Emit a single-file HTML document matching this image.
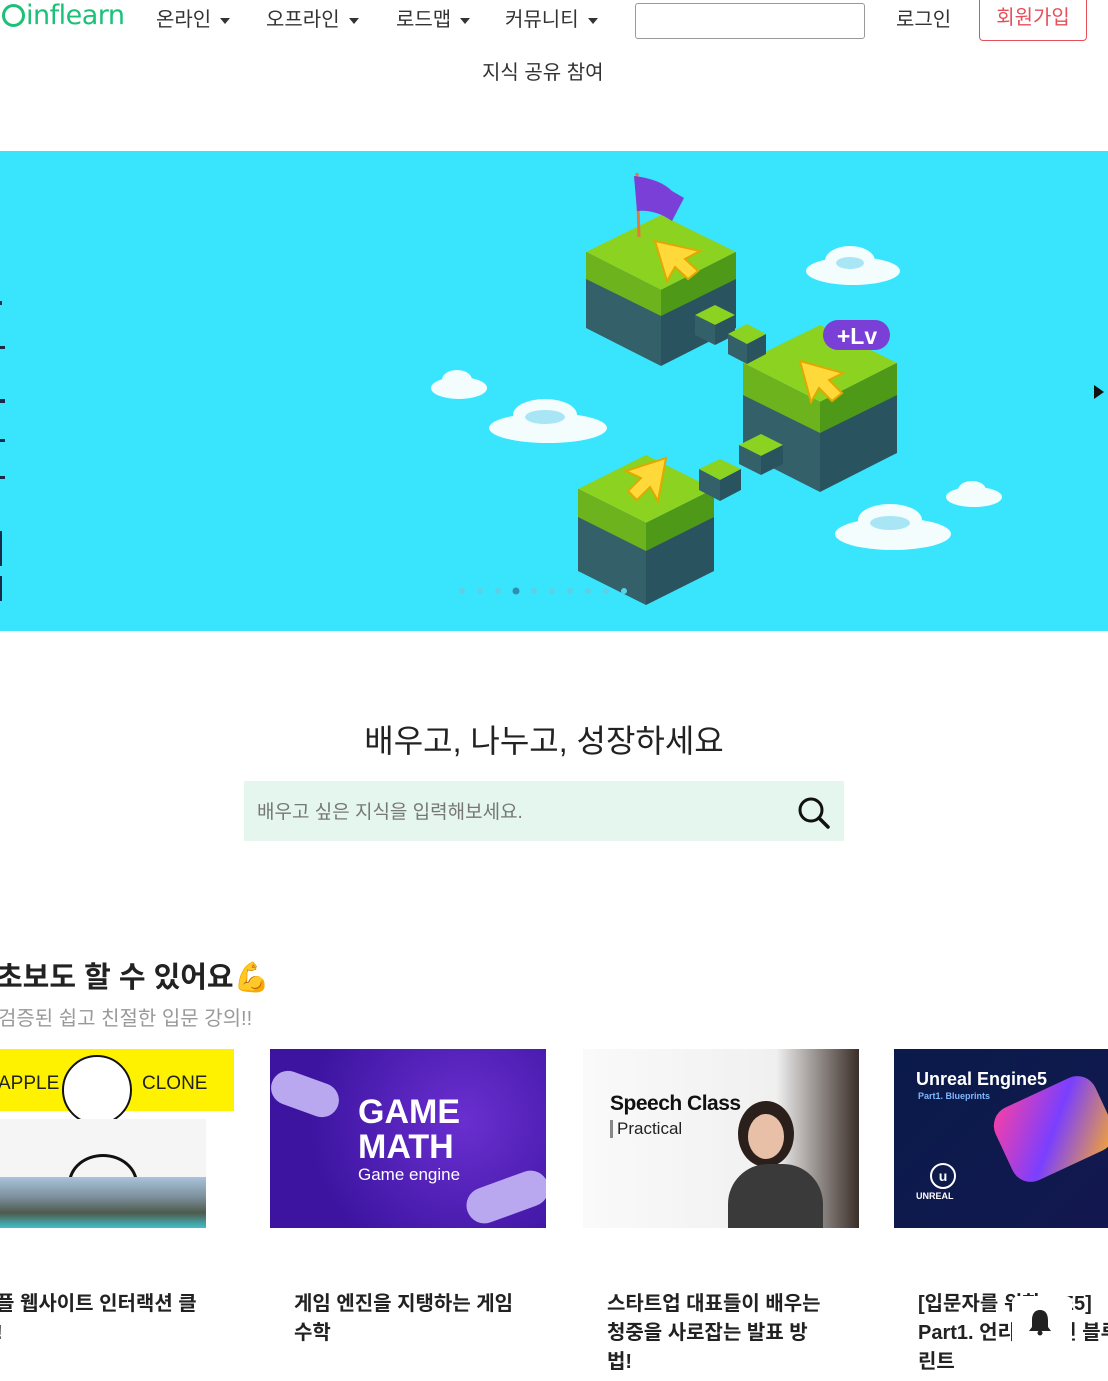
<!DOCTYPE html>
<html><head><meta charset="utf-8">
<style>
*{margin:0;padding:0;box-sizing:border-box}
body{width:1108px;height:1381px;overflow:hidden;background:#fff;position:relative;font-family:"Liberation Sans","Noto Sans CJK KR",sans-serif;color:#222}
.a{position:absolute;white-space:nowrap}
.nav{font-size:20px;color:#333;top:3px}
.car{display:inline-block;width:0;height:0;border-left:5px solid transparent;border-right:5px solid transparent;border-top:6px solid #333;margin-left:9px;vertical-align:middle}
.card{position:absolute;top:1049px;width:276px;height:179px;overflow:hidden}
.ct{position:absolute;top:1290px;font-size:20px;font-weight:bold;line-height:29px;color:#222;white-space:nowrap}
</style></head><body>
<div class="a" style="left:2px;top:0;font-size:27px;color:#1dc078;letter-spacing:-0.5px;font-family:'DejaVu Sans',sans-serif">
<span style="display:inline-block;width:23px;height:23px;border:3px solid #1dc078;border-radius:50%;vertical-align:-3px;margin-right:1px"></span>inflearn</div>
<div class="a nav" style="left:156px">온라인<span class="car"></span></div>
<div class="a nav" style="left:266px">오프라인<span class="car"></span></div>
<div class="a nav" style="left:396px">로드맵<span class="car"></span></div>
<div class="a nav" style="left:505px">커뮤니티<span class="car"></span></div>
<div class="a" style="left:635px;top:3px;width:230px;height:36px;border:1px solid #999;border-radius:3px"></div>
<div class="a nav" style="left:896px">로그인</div>
<div class="a" style="left:979px;top:-4px;width:108px;height:45px;border:1px solid #e5505a;border-radius:4px;color:#e5505a;font-size:20px;text-align:center;line-height:42px">회원가입</div>
<div class="a" style="left:482px;top:56px;font-size:20px;color:#333">지식 공유 참여</div>

<div class="a" style="left:0;top:151px;width:1108px;height:480px;background:#38e5fd;overflow:hidden">
<svg width="1108" height="480" style="position:absolute;left:0;top:0">
<g fill="#fff" opacity=".95">
<ellipse cx="853" cy="120" rx="47" ry="14"/><ellipse cx="850" cy="110" rx="25" ry="15"/>
<ellipse cx="459" cy="237" rx="28" ry="11"/><ellipse cx="457" cy="229" rx="15" ry="10"/>
<ellipse cx="548" cy="277" rx="59" ry="15"/><ellipse cx="545" cy="264" rx="32" ry="16"/>
<ellipse cx="974" cy="346" rx="28" ry="10"/><ellipse cx="972" cy="339" rx="14" ry="9"/>
<ellipse cx="893" cy="383" rx="58" ry="16"/><ellipse cx="890" cy="369" rx="32" ry="16"/>
</g>
<g fill="#a8e6f5"><ellipse cx="850" cy="112" rx="14" ry="6"/><ellipse cx="545" cy="266" rx="20" ry="7"/><ellipse cx="890" cy="372" rx="20" ry="7"/></g>
<polygon points="661,64 736,101 661,139 586,101" fill="#8bd320"/>
<polygon points="586,101 661,139 661,215 586,177" fill="#34606a"/>
<polygon points="661,139 736,101 736,177 661,215" fill="#2a5360"/>
<polygon points="586,101 661,139 661,165 586,128" fill="#6db31d"/>
<polygon points="661,139 736,101 736,128 661,165" fill="#4e9a18"/>
<polygon points="820,174 897,212 820,251 743,212" fill="#8bd320"/>
<polygon points="743,212 820,251 820,341 743,302" fill="#34606a"/>
<polygon points="820,251 897,212 897,302 820,341" fill="#2a5360"/>
<polygon points="743,212 820,251 820,282 743,244" fill="#6db31d"/>
<polygon points="820,251 897,212 897,244 820,282" fill="#4e9a18"/>
<polygon points="646,304 714,338 646,372 578,338" fill="#8bd320"/>
<polygon points="578,338 646,372 646,454 578,420" fill="#34606a"/>
<polygon points="646,372 714,338 714,420 646,454" fill="#2a5360"/>
<polygon points="578,338 646,372 646,400 578,366" fill="#6db31d"/>
<polygon points="646,372 714,338 714,366 646,400" fill="#4e9a18"/>
<g>
<polygon points="715,154 735,164 715,174 695,164" fill="#8bd320"/><polygon points="695,164 715,174 715,194 695,184" fill="#34606a"/><polygon points="715,174 735,164 735,184 715,194" fill="#2a5360"/>
<polygon points="747,173 766,183 747,193 728,183" fill="#8bd320"/><polygon points="728,183 747,193 747,213 728,203" fill="#34606a"/><polygon points="747,193 766,183 766,203 747,213" fill="#2a5360"/>
<polygon points="761,283 783,294 761,305 739,294" fill="#8bd320"/><polygon points="739,294 761,305 761,324 739,313" fill="#34606a"/><polygon points="761,305 783,294 783,313 761,324" fill="#2a5360"/>
<polygon points="720,308 741,318 720,329 699,318" fill="#8bd320"/><polygon points="699,318 720,329 720,350 699,339" fill="#34606a"/><polygon points="720,329 741,318 741,339 720,350" fill="#2a5360"/>
</g>
<line x1="637" y1="22" x2="639" y2="86" stroke="#e37a3a" stroke-width="3"/>
<path d="M634 25 Q660 28 672 40 L684 47 L672 70 Q655 58 637 60 Z" fill="#7a3fd6"/>
<g fill="#ffd83a" stroke="#e0a800" stroke-width="2">
<path d="M655 90 L700 100 L685 108 L698 120 L688 128 L675 116 L667 130 Z"/>
<path d="M800 210 L843 222 L829 229 L842 242 L832 250 L819 237 L811 251 Z"/>
<path d="M666 307 L658 350 L650 336 L637 349 L628 340 L641 327 L626 320 Z"/>
</g>
<rect x="823" y="169" width="67" height="30" rx="15" fill="#7a3fd6"/>
<text x="857" y="193" font-family="Liberation Sans" font-weight="bold" font-size="23" fill="#fff" text-anchor="middle">+Lv</text>
<g fill="#5fcfe6"><circle cx="462" cy="440" r="3"/><circle cx="480" cy="440" r="3"/><circle cx="498" cy="440" r="3"/><circle cx="516" cy="440" r="3.5" fill="#2f8fb0"/><circle cx="534" cy="440" r="3"/><circle cx="552" cy="440" r="3"/><circle cx="570" cy="440" r="3"/><circle cx="588" cy="440" r="3"/><circle cx="606" cy="440" r="3"/><circle cx="624" cy="440" r="3"/></g>
<polygon points="1094,234 1104,241 1094,248" fill="#111"/>
<g fill="#1a2a4a"><rect x="0" y="150" width="2" height="4"/><rect x="0" y="195" width="5" height="3"/><rect x="0" y="248" width="5" height="4"/><rect x="0" y="288" width="5" height="3"/><rect x="0" y="325" width="5" height="3"/><rect x="0" y="380" width="2" height="35"/><rect x="0" y="425" width="2" height="25"/></g>
</svg>
</div>

<div class="a" style="left:0;width:1088px;text-align:center;top:716px;font-size:32px;color:#222">배우고, 나누고, 성장하세요</div>
<div class="a" style="left:244px;top:781px;width:600px;height:60px;background:#e4f6ee"></div>
<div class="a" style="left:257px;top:797px;font-size:19px;color:#777">배우고 싶은 지식을 입력해보세요.</div>
<svg class="a" style="left:796px;top:795px" width="36" height="36"><circle cx="15" cy="15" r="11" fill="none" stroke="#111" stroke-width="3"/><line x1="23" y1="23" x2="32" y2="32" stroke="#111" stroke-width="3.5" stroke-linecap="round"/></svg>

<div class="a" style="left:-4px;top:954px;font-size:29px;font-weight:bold;color:#222">초보도 할 수 있어요<span style="color:#f5b400">💪</span></div>
<div class="a" style="left:-2px;top:1002px;font-size:20px;color:#999">검증된 쉽고 친절한 입문 강의!!</div>

<div class="card" style="left:-42px;background:#fff">
<div style="position:absolute;left:0;top:0;width:276px;height:62px;background:#fff200"></div>
<div style="position:absolute;left:40px;top:24px;font-size:19px">APPLE</div>
<div style="position:absolute;left:184px;top:24px;font-size:19px">CLONE</div>
<div style="position:absolute;left:104px;top:6px;width:70px;height:70px;border:2px solid #111;border-radius:50%;background:#fff"></div>
<div style="position:absolute;left:40px;top:70px;width:208px;height:110px;background:#f5f5f5"></div>
<div style="position:absolute;left:110px;top:105px;width:70px;height:60px;border:3px solid #111;border-radius:50%"></div>
<div style="position:absolute;left:40px;top:128px;width:208px;height:51px;background:linear-gradient(#a9c3dc,#7b8f9a 40%,#4f5a4e 70%,#3fc0c8)"></div>
</div>
<div class="card" style="left:270px;background:radial-gradient(circle at 70% 40%,#6a2fd0,#3c14a0 70%)">
<div style="position:absolute;left:88px;top:46px;color:#fff;font-weight:bold;font-size:34px;line-height:35px">GAME<br>MATH</div>
<div style="position:absolute;left:88px;top:116px;color:#fff;font-size:17px">Game engine</div>
<div style="position:absolute;left:0;top:28px;width:70px;height:34px;border-radius:17px;background:#b9a8f0;transform:rotate(20deg)"></div>
<div style="position:absolute;left:195px;top:130px;width:85px;height:36px;border-radius:18px;background:#b9a8f0;transform:rotate(-20deg)"></div>
</div>
<div class="card" style="left:583px;background:linear-gradient(90deg,#fafafa 0,#f0f0f0 70%,#3a2e28 100%)">
<div style="position:absolute;left:27px;top:43px;font-weight:bold;font-size:21px;color:#111;letter-spacing:-0.5px">Speech Class</div>
<div style="position:absolute;left:27px;top:71px;font-size:17px;color:#222;border-left:3px solid #888;padding-left:4px;line-height:18px">Practical</div>
<div style="position:absolute;left:155px;top:52px;width:56px;height:66px;border-radius:50%;background:#2a1f1a"></div>
<div style="position:absolute;left:165px;top:65px;width:36px;height:45px;border-radius:50%;background:#e8c0a8"></div>
<div style="position:absolute;left:145px;top:115px;width:95px;height:70px;border-radius:40px 40px 0 0;background:#3a3a3a"></div>
</div>
<div class="card" style="left:894px;background:linear-gradient(135deg,#0a1a4a,#141850)">
<div style="position:absolute;left:22px;top:20px;color:#fff;font-weight:bold;font-size:18px">Unreal Engine5</div>
<div style="position:absolute;left:24px;top:42px;color:#7fb8ff;font-size:9px;font-weight:bold">Part1. Blueprints</div>
<div style="position:absolute;left:36px;top:114px;width:26px;height:26px;border:2px solid #fff;border-radius:50%;color:#fff;font-size:14px;text-align:center;line-height:22px;font-weight:bold">u</div>
<div style="position:absolute;left:22px;top:142px;color:#fff;font-size:9px;font-weight:bold">UNREAL</div>
<div style="position:absolute;left:105px;top:40px;width:110px;height:80px;background:linear-gradient(135deg,#ff3fa0,#7a3fff 50%,#ffb020);border-radius:20px;transform:rotate(-25deg)"></div>
</div>

<div class="ct" style="left:-4px">플 웹사이트 인터랙션 클<br>!</div>
<div class="ct" style="left:294px">게임 엔진을 지탱하는 게임<br>수학</div>
<div class="ct" style="left:607px">스타트업 대표들이 배우는<br>청중을 사로잡는 발표 방<br>법!</div>
<div class="ct" style="left:918px">[입문자를 위한 UE5]<br>Part1. 언리얼 엔진 블루<br>린트</div>
<div class="a" style="left:1012px;top:1296px;width:60px;height:50px;background:#fff;border-radius:6px"></div>
<svg class="a" style="left:1028px;top:1308px" width="24" height="28"><path d="M12 2 C6 2 4 7 4 12 L4 19 L1 23 L23 23 L20 19 L20 12 C20 7 18 2 12 2 Z" fill="#222"/><circle cx="12" cy="25" r="2.5" fill="#222"/></svg>
</body></html>
